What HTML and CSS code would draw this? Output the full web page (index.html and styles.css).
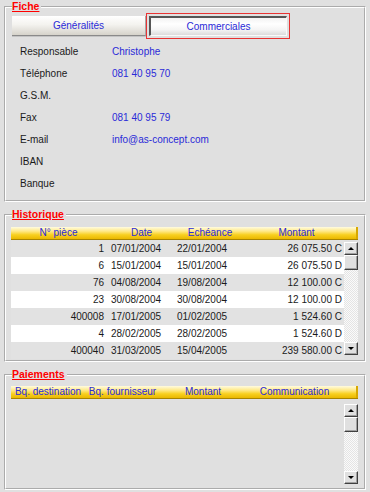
FILE: index.html
```html
<!DOCTYPE html>
<html lang="fr">
<head>
  <meta charset="UTF-8">
  <title>Fiche client</title>
  <link rel="stylesheet" href="styles.css">
</head>
<body>
  <div class="page">

    <!-- Fiche -->
    <fieldset class="group">
      <legend>Fiche</legend>
      <div class="tabs">
        <div class="tab">Généralités</div>
        <div class="tab-active"><div class="tab-inner">Commerciales</div></div>
      </div>
      <div class="fields">
        <div class="field"><span class="label">Responsable</span><span class="value">Christophe</span></div>
        <div class="field"><span class="label">Téléphone</span><span class="value">081 40 95 70</span></div>
        <div class="field"><span class="label">G.S.M.</span><span class="value"></span></div>
        <div class="field"><span class="label">Fax</span><span class="value">081 40 95 79</span></div>
        <div class="field"><span class="label">E-mail</span><span class="value">info@as-concept.com</span></div>
        <div class="field"><span class="label">IBAN</span><span class="value"></span></div>
        <div class="field"><span class="label">Banque</span><span class="value"></span></div>
      </div>
    </fieldset>

    <!-- Historique -->
    <fieldset class="group">
      <legend>Historique</legend>
      <div class="head head-hist">
        <span>N° pièce</span><span>Date</span><span>Echéance</span><span>Montant</span>
      </div>
      <div class="list">
        <div class="rows">
          <div class="row"><span class="num">1</span><span class="date">07/01/2004</span><span>22/01/2004</span><span class="amount">26 075.50 C</span></div>
          <div class="row"><span class="num">6</span><span class="date">15/01/2004</span><span>15/01/2004</span><span class="amount">26 075.50 D</span></div>
          <div class="row"><span class="num">76</span><span class="date">04/08/2004</span><span>19/08/2004</span><span class="amount">12 100.00 C</span></div>
          <div class="row"><span class="num">23</span><span class="date">30/08/2004</span><span>30/08/2004</span><span class="amount">12 100.00 D</span></div>
          <div class="row"><span class="num">400008</span><span class="date">17/01/2005</span><span>01/02/2005</span><span class="amount">1 524.60 C</span></div>
          <div class="row"><span class="num">4</span><span class="date">28/02/2005</span><span>28/02/2005</span><span class="amount">1 524.60 D</span></div>
          <div class="row"><span class="num">400040</span><span class="date">31/03/2005</span><span>15/04/2005</span><span class="amount">239 580.00 C</span></div>
        </div>
        <div class="scrollbar sb-hist">
          <div class="sb-btn"><span class="arrow-up"></span></div>
          <div class="sb-thumb"></div>
          <div class="sb-track"></div>
          <div class="sb-btn"><span class="arrow-down"></span></div>
        </div>
      </div>
    </fieldset>

    <!-- Paiements -->
    <fieldset class="group">
      <legend>Paiements</legend>
      <div class="head head-pay">
        <span>Bq. destination</span><span>Bq. fournisseur</span><span>Montant</span><span>Communication</span>
      </div>
      <div class="list list-pay">
        <div class="rows"></div>
        <div class="scrollbar sb-pay">
          <div class="sb-btn"><span class="arrow-up"></span></div>
          <div class="sb-thumb"></div>
          <div class="sb-track"></div>
          <div class="sb-btn"><span class="arrow-down"></span></div>
        </div>
      </div>
    </fieldset>

  </div>
</body>
</html>
```

FILE: styles.css
```css
body {
  margin: 0;
  background: #e0e0e0;
  font-family: "Liberation Sans", Arial, sans-serif;
  font-size: 10px;
  color: #1a1a1a;
}
.page {
  padding: 0 4px;
}
.group {
  margin: 0 0 6px 0;
  padding: 0 6px 0 5px;
  border: 2px groove #fff;
  min-width: 0;
}
.group legend {
  padding: 0 2px 0 0;
  margin-left: 1px;
  height: 13px;
  line-height: 13px;
  color: #f00;
  font-weight: bold;
  font-size: 10.5px;
  text-decoration: underline;
}

/* tabs */
.tabs {
  display: flex;
  height: 26px;
  padding-left: 1px;
}
.tab {
  margin-top: 3px;
  width: 133px;
  height: 19px;
  line-height: 19px;
  text-align: center;
  color: #2a2ad8;
  background: linear-gradient(#ffffff, #f4f3ef 45%, #d6d3cb);
  border-right: 1px solid #a8a8a8;
  border-bottom: 1px solid #8a8a8a;
  box-shadow: 0 1px 0 #c4c4c4;
}
.tab-active {
  width: 138px;
  height: 20px;
  padding: 2px;
  border: 1px solid #e83333;
}
.tab-inner {
  height: 17px;
  line-height: 17px;
  text-align: center;
  color: #2a2ad8;
  border-top: 2px solid #555;
  border-left: 2px solid #555;
  border-bottom: 1px solid #fafafa;
  border-right: 1px solid #fafafa;
  background: linear-gradient(#f2f2f2, #ffffff 35%, #f4f4f4 70%, #dcdcdc);
}

/* fields */
.fields {
  padding: 1px 0 6px 9px;
}
.field {
  display: flex;
  align-items: center;
  height: 22px;
}
.label {
  width: 92px;
}
.value {
  color: #2a2ad8;
}

/* list headers */
.head {
  display: grid;
  height: 12px;
  line-height: 12px;
  color: #2a2ad8;
  text-align: center;
  background: linear-gradient(#fffbe0, #ffe988 35%, #f8d020 65%, #eab800);
  border-bottom: 1px solid #a88400;
  box-shadow: inset -2px 0 0 #d8a800;
}
.head-hist {
  margin-top: 6px;
  grid-template-columns: 95px 71px 66px 1fr;
  padding-right: 8px;
}
.head-pay {
  margin-top: 5px;
  grid-template-columns: 74px 75px 86px 1fr;
  padding-right: 15px;
}

/* rows */
.list {
  display: flex;
  align-items: flex-start;
  padding-bottom: 1px;
}
.rows {
  width: 333px;
}
.row {
  display: grid;
  grid-template-columns: 95px 71px 66px 1fr;
  height: 17px;
  line-height: 17px;
  background: #e2e2e2;
}
.row:nth-child(even) {
  background: #fff;
}
.num {
  text-align: right;
  padding-right: 2px;
}
.date {
  padding-left: 5px;
}
.amount {
  text-align: right;
  padding-right: 2px;
}
.list-pay {
  padding: 5px 0 4px 0;
}
.list-pay .rows {
  height: 80px;
}

/* scrollbars */
.scrollbar {
  width: 14px;
  display: flex;
  flex-direction: column;
}
.sb-hist {
  margin-top: 2px;
  height: 113px;
}
.sb-pay {
  height: 80px;
}
.sb-btn,
.sb-thumb {
  box-sizing: border-box;
  height: 13px;
  background: #e0e0e0;
  border: 1px solid;
  border-color: #fff #404040 #404040 #fff;
  box-shadow: inset -1px -1px 0 #a0a0a0;
  display: flex;
  align-items: center;
  justify-content: center;
}
.sb-thumb {
  height: 15px;
}
.sb-track {
  flex: 1;
  background: repeating-conic-gradient(#fafafa 0 25%, #e4e4e4 0 50%) 0 0 / 2px 2px;
}
.arrow-up {
  width: 0;
  height: 0;
  border-left: 3px solid transparent;
  border-right: 3px solid transparent;
  border-bottom: 3px solid #000;
}
.arrow-down {
  width: 0;
  height: 0;
  border-left: 3px solid transparent;
  border-right: 3px solid transparent;
  border-top: 3px solid #000;
}
```
